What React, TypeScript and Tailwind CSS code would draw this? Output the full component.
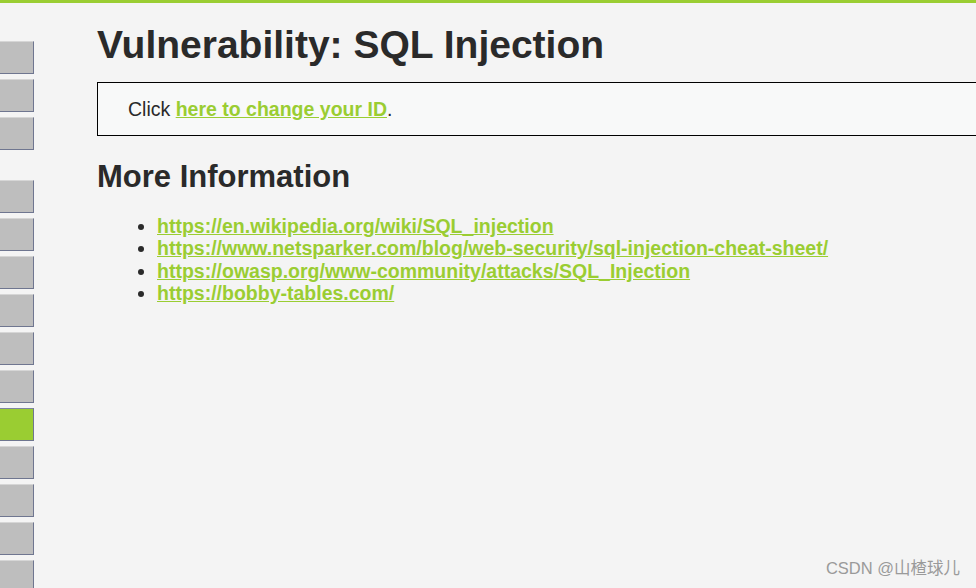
const groups = [3, 11];
const activeIndex = 9;

const links = [
  "https://en.wikipedia.org/wiki/SQL_injection",
  "https://www.netsparker.com/blog/web-security/sql-injection-cheat-sheet/",
  "https://owasp.org/www-community/attacks/SQL_Injection",
  "https://bobby-tables.com/",
];

function SideButton({ active }: { active?: boolean }) {
  return (
    <div
      className={
        active
          ? "h-[33px] w-[34px] shrink-0 border-t border-r border-b border-t-[#7d85a0] border-r-[#6f7690] border-b-[#6f7690] bg-[#9acd32]"
          : "h-[33px] w-[34px] shrink-0 border-t border-r border-b border-t-[#d6d6d6] border-r-[#6f7690] border-b-[#6f7690] bg-[#bebebe]"
      }
    />
  );
}

export default function App() {
  let counter = 0;
  return (
    <div
      className="relative h-[588px] w-[976px] overflow-hidden border-t-[3px] border-[#9acd32] bg-[#f4f4f4] text-[#2a2a2a]"
      style={{ fontFamily: '"Liberation Sans", Arial, sans-serif' }}
    >
      <div className="flex">
        <div className="flex w-[34px] shrink-0 flex-col gap-[30px] pt-[38px]">
          {groups.map((n, g) => (
            <div key={g} className="flex flex-col gap-[5px]">
              {Array.from({ length: n }).map((_, i) => {
                const idx = counter++;
                return <SideButton key={i} active={idx === activeIndex} />;
              })}
            </div>
          ))}
        </div>

        <div className="ml-[63px] flex-1">
          <h1 className="mt-[22px] text-[39px] font-bold leading-[40px]">
            Vulnerability: SQL Injection
          </h1>

          <div className="mr-[-40px] mt-[17px] h-[54px] border border-black bg-[#f8f9f9] pl-[30px] pt-[14px] text-[19.5px] leading-[24px]">
            Click{" "}
            <a href="#" className="font-bold text-[#9acd32] underline">
              here to change your ID
            </a>
            .
          </div>

          <h2 className="mt-[24px] text-[31px] font-bold leading-[34px]">
            More Information
          </h2>

          <ul className="mt-[21px] list-disc pl-[60px] text-[19.5px] leading-[22.4px]">
            {links.map((l) => (
              <li key={l}>
                <a href="#" className="font-bold text-[#9acd32] underline">
                  {l}
                </a>
              </li>
            ))}
          </ul>
        </div>
      </div>

      <div
        className="absolute bottom-[7px] right-[16px] text-[16.5px] text-[#9a9a9a]"
        style={{ fontFamily: '"Liberation Sans", "Noto Sans CJK SC", sans-serif' }}
      >
        CSDN @山楂球儿
      </div>
    </div>
  );
}
